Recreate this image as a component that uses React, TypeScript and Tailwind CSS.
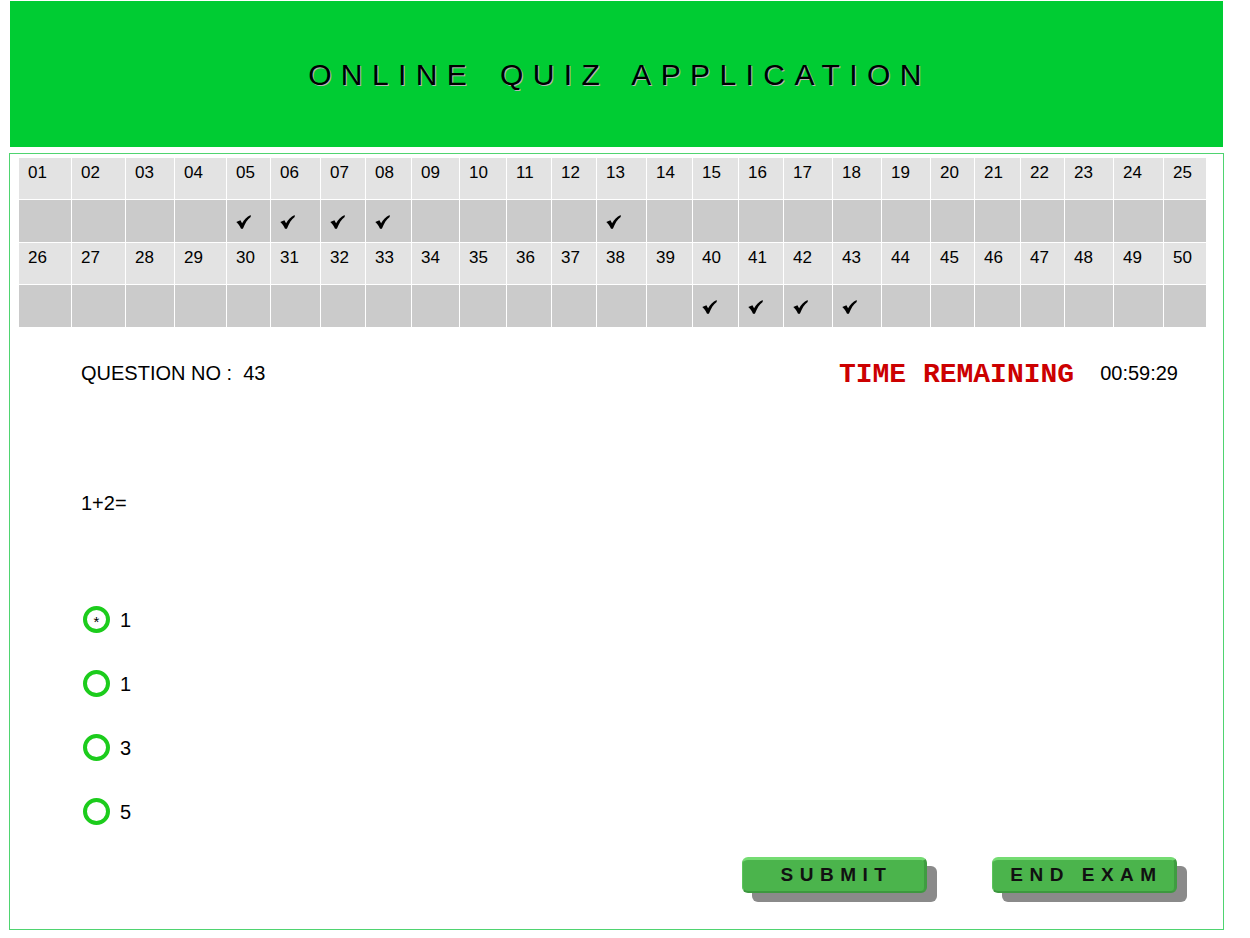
import React from "react"

const COLS =
  "grid-cols-[53px_54px_49px_52px_44px_50px_45px_46px_48px_47px_45px_45px_50px_46px_46px_45px_49px_49px_49px_44px_46px_44px_49px_50px_43px]"

const answered = new Set([5, 6, 7, 8, 13, 40, 41, 42, 43])

function Check() {
  return (
    <svg width="15" height="14" viewBox="0 0 15 14">
      <path
        d="M0.3 7 L4.4 5.2 L6.1 8.2 C8 4.8 10.8 1.8 14.7 0 L14.7 1.9 C11.6 4 9 8 6.9 13.8 L5 13.8 C3.8 11 2.4 8.7 0.3 7 Z"
        fill="#000"
      />
    </svg>
  )
}

function Radio({ selected, label }: { selected?: boolean; label: string }) {
  return (
    <div className="flex items-center h-[27px]">
      <div className="w-[27px] h-[27px] rounded-full border-[4px] border-[color:#1ccc1c] flex items-center justify-center">
        {selected && <span className="text-[15px] leading-none text-black mt-[3px]">*</span>}
      </div>
      <span className="ml-[10px] text-[20px] text-black">{label}</span>
    </div>
  )
}

function BevelButton({ label }: { label: string }) {
  return (
    <button className="w-[185px] h-[36px] rounded-[6px] bg-[#4bb44c] border-t-[3px] border-t-[color:#74dc72] border-r-[3px] border-r-[color:#3f9c41] border-b-[2px] border-b-[color:#3d983f] border-l border-l-[color:#5cc45c] shadow-[10px_9px_0_#8a8a8a] flex items-center justify-center pl-[6px] text-[19px] font-bold tracking-[6.5px] text-[#111]">
      {label}
    </button>
  )
}

export default function App() {
  const rows = [0, 1]

  return (
    <div className="w-[1233px] min-h-[938px] pl-[10px] pt-[1px] bg-white font-['Liberation_Sans',Arial,sans-serif]">
      <header className="w-[1213px] h-[146px] bg-[#00cc33] flex items-center justify-center">
        <h1 className="pl-[6px] text-[30px] font-normal tracking-[9.4px] [word-spacing:6px] text-black [text-shadow:1px_1px_0_#b5b5b5]">
          ONLINE QUIZ APPLICATION
        </h1>
      </header>

      <section className="mt-[6px] -ml-px w-[1215px] h-[777px] border-[1px] border-solid border-[color:#4fd470]">
        <div className={`grid ${COLS} ml-[9px] mt-[4px] w-[1188px]`}>
          {rows.map((r) => (
            <React.Fragment key={r}>
              {Array.from({ length: 25 }, (_, i) => {
                const n = r * 25 + i + 1
                return (
                  <div
                    key={"n" + n}
                    className="h-[42px] bg-[#e3e3e3] border-r border-b border-white pl-[9px] pt-[2px] text-[17px] text-black"
                  >
                    {String(n).padStart(2, "0")}
                  </div>
                )
              })}
              {Array.from({ length: 25 }, (_, i) => {
                const n = r * 25 + i + 1
                return (
                  <div
                    key={"c" + n}
                    className="h-[43px] bg-[#cbcbcb] border-r border-b border-white pl-[9px] pt-[15px]"
                  >
                    {answered.has(n) && <Check />}
                  </div>
                )
              })}
            </React.Fragment>
          ))}
        </div>

        <div className="mt-[28px] h-[32px] pl-[71px] pr-[45px] flex items-start justify-between">
          <p className="mt-[2px] text-[20px] text-black whitespace-pre">QUESTION NO :  43</p>
          <div className="flex items-start">
            <span className="-mt-[2px] font-['Liberation_Mono','Courier_New',monospace] font-bold text-[28px] text-[#cc0000]">
              TIME REMAINING
            </span>
            <span className="ml-[26px] mt-[2px] text-[20px] text-black">00:59:29</span>
          </div>
        </div>

        <p className="mt-[100px] pl-[71px] text-[20px] text-black">1+2=</p>

        <div className="mt-[88px] pl-[73px] flex flex-col gap-[37px]">
          <Radio selected label="1" />
          <Radio label="1" />
          <Radio label="3" />
          <Radio label="5" />
        </div>

        <div className="mt-[32px] pr-[46px] flex justify-end gap-[65px]">
          <BevelButton label="SUBMIT" />
          <BevelButton label="END EXAM" />
        </div>
      </section>
    </div>
  )
}
